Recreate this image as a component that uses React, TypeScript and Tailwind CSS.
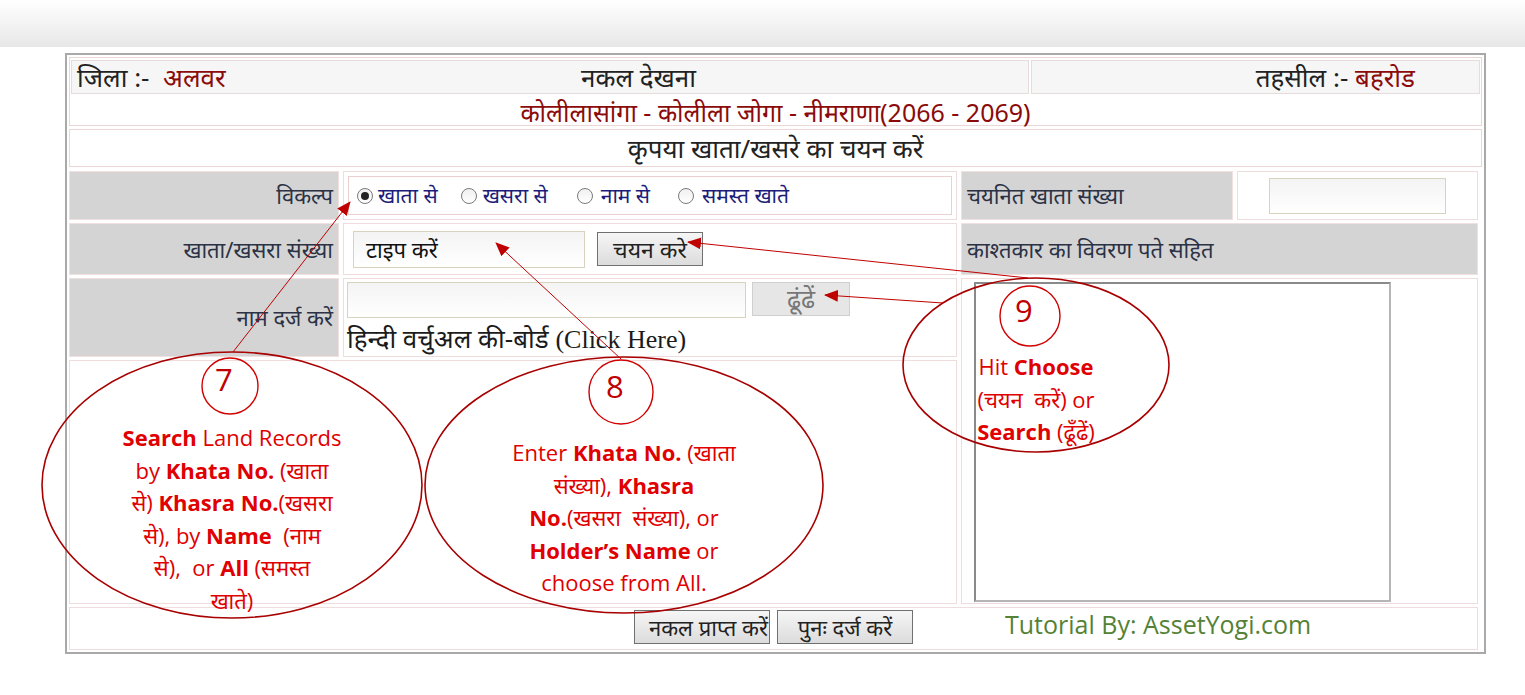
import React from "react";

const dev = { fontFamily: '"Noto Sans", "Liberation Sans", sans-serif' };

function Radio({ checked }: { checked?: boolean }) {
  return (
    <span className="inline-flex items-center justify-center w-[16px] h-[16px] rounded-full border border-[#7a7a7a] bg-gradient-to-b from-[#f0f0f0] to-white">
      {checked && <span className="w-[8px] h-[8px] rounded-full bg-[#222]" />}
    </span>
  );
}

function Overlay() {
  const red = "#a80000";
  return (
    <svg className="absolute left-0 top-0 pointer-events-none" width={1525} height={695}>
      <defs>
        <marker id="ah2" markerWidth="14" markerHeight="12" refX="13" refY="6" orient="auto" markerUnits="userSpaceOnUse">
          <path d="M0,0 L14,6 L0,12 z" fill="#c00000" />
        </marker>
      </defs>
      <ellipse cx={232} cy={485} rx={190} ry={133} fill="none" stroke={red} strokeWidth={1.6} />
      <circle cx={230} cy={386} r={28} fill="none" stroke="#d00000" strokeWidth={1.4} />
      <ellipse cx={624} cy={485} rx={199} ry={128} fill="none" stroke={red} strokeWidth={1.6} />
      <circle cx={621} cy={392} r={32} fill="none" stroke="#d00000" strokeWidth={1.4} />
      <ellipse cx={1036} cy={365} rx={133} ry={87} fill="none" stroke={red} strokeWidth={1.6} />
      <circle cx={1030} cy={316} r={30} fill="none" stroke="#d00000" strokeWidth={1.4} />
      <line x1={233} y1={352} x2={350} y2={202} stroke="#c00000" strokeWidth={1} markerEnd="url(#ah2)" />
      <line x1={621} y1={359} x2={496} y2={243} stroke="#c00000" strokeWidth={1} markerEnd="url(#ah2)" />
      <line x1={1028} y1={278} x2={688} y2={242} stroke="#c00000" strokeWidth={1} markerEnd="url(#ah2)" />
      <line x1={943} y1={303} x2={825} y2={295} stroke="#c00000" strokeWidth={1} markerEnd="url(#ah2)" />
    </svg>
  );
}

const annFont = { fontFamily: '"Open Sans", "Noto Sans", sans-serif' };

function Annotations() {
  return (
    <>
      <div className="absolute left-[215px] top-[364px] text-[31px] leading-none text-[#c00000]" style={annFont}>7</div>
      <div className="absolute left-[606px] top-[371px] text-[31px] leading-none text-[#c00000]" style={annFont}>8</div>
      <div className="absolute left-[1015px] top-[295px] text-[31px] leading-none text-[#c00000]" style={annFont}>9</div>

      <div className="absolute left-[72px] top-[421px] w-[320px] text-center text-[22px] leading-[32.5px] text-[#e00000]" style={annFont}>
        <div><b>Search</b> Land Records</div>
        <div>by <b>Khata No.</b> (खाता</div>
        <div>से) <b>Khasra No.</b>(खसरा</div>
        <div>से), by <b>Name</b>&nbsp; (नाम</div>
        <div>से),&nbsp; or <b>All</b> (समस्त</div>
        <div>खाते)</div>
      </div>

      <div className="absolute left-[464px] top-[436px] w-[320px] text-center text-[22px] leading-[32.5px] text-[#e00000]" style={annFont}>
        <div>Enter <b>Khata No.</b> (खाता</div>
        <div>संख्या), <b>Khasra</b></div>
        <div><b>No.</b>(खसरा&nbsp; संख्या), or</div>
        <div><b>Holder’s Name</b> or</div>
        <div>choose from All.</div>
      </div>

      <div className="absolute left-[931px] top-[350px] w-[210px] text-center text-[22px] leading-[32.5px] text-[#e00000]" style={annFont}>
        <div>Hit <b>Choose</b></div>
        <div>(चयन&nbsp; करें) or</div>
        <div><b>Search</b> (ढूँढें)</div>
      </div>
    </>
  );
}

export default function App() {
  const label = "bg-[#d4d4d4] border border-[#f0e0e0] flex items-center text-[22px] text-[#2b3245]";
  const cell = "bg-white border border-[#efdcdc]";
  const btn =
    "border border-[#707070] bg-gradient-to-b from-[#f6f6f6] to-[#dcdcdc] text-[#222] flex items-center justify-center overflow-hidden whitespace-nowrap";
  return (
    <div className="relative w-[1525px] h-[695px] bg-white overflow-hidden" style={dev}>
      <div className="h-[47px] bg-gradient-to-b from-white to-[#e7e7e7]" />
      <div className="ml-[65px] mt-[6px] w-[1421px] h-[601px] border-2 border-[#a9a9a9] flex flex-col pt-[2px] px-[2px] gap-[3px]">
        {/* Header box */}
        <div className="h-[69px] border border-[#ecd6d6] bg-white pt-[2px] px-[1px] flex flex-col">
          <div className="flex h-[34px] gap-[2px]">
            <div className="w-[958px] bg-[#f6f6f6] border border-[#e7dcdc] relative flex items-center text-[26px] text-[#222]">
              <span className="pl-[5px]">
                जिला :- &nbsp;<span className="text-[#8b0b0b]">अलवर</span>
              </span>
              <span className="absolute left-[509px]">नकल देखना</span>
            </div>
            <div className="flex-1 bg-[#f6f6f6] border border-[#e7dcdc] flex items-center justify-end pr-[64px] text-[26px] text-[#222]">
              <span>
                तहसील :- <span className="text-[#8b0b0b]">बहरोड</span>
              </span>
            </div>
          </div>
          <div className="flex-1 flex items-center justify-center text-[25px] text-[#8b0b0b]">
            कोलीलासांगा - कोलीला जोगा - नीमराणा(2066 - 2069)
          </div>
        </div>
        <div className="h-[38px] border border-[#ecd6d6] bg-white flex items-center justify-center text-[26px] text-[#222]">
          कृपया खाता/खसरे का चयन करें
        </div>
        {/* Main grid */}
        <div className="grid grid-cols-[270px_614px_272px_241px] grid-rows-[49px_52px_79px_244px_43px] gap-x-[4px] gap-y-[3px] pt-[1px]">
          {/* Row 4 */}
          <div className={label + " justify-end pr-[5px]"}>विकल्प</div>
          <div className={cell + " p-[4px]"}>
            <div className="h-full border border-[#ecd0d0] flex items-center pl-[8px] text-[21px] text-[#1c1c7a]">
              <Radio checked />
              <span className="ml-[5px]">खाता से</span>
              <span className="ml-[23px] flex"><Radio /></span>
              <span className="ml-[6px]">खसरा से</span>
              <span className="ml-[29px] flex"><Radio /></span>
              <span className="ml-[8px]">नाम से</span>
              <span className="ml-[28px] flex"><Radio /></span>
              <span className="ml-[8px]">समस्त खाते</span>
            </div>
          </div>
          <div className={label + " pl-[5px]"}>चयनित खाता संख्या</div>
          <div className={cell + " flex items-center pl-[31px]"}>
            <div className="w-[177px] h-[36px] border border-[#d9d2bd] bg-gradient-to-b from-[#f4f4f4] to-white" />
          </div>
          {/* Row 5 */}
          <div className={label + " justify-end pr-[5px]"}>खाता/खसरा संख्या</div>
          <div className={cell + " flex items-center pl-[9px]"}>
            <div className="w-[232px] h-[37px] border border-[#d9d2bd] bg-gradient-to-b from-[#f4f4f4] to-white flex items-center pl-[12px] text-[22px] text-[#111]">
              टाइप करें
            </div>
            <div className={btn + " ml-[12px] w-[106px] h-[34px] text-[23px]"}>चयन करे</div>
          </div>
          <div className={label + " col-span-2 pl-[5px]"}>काश्तकार का विवरण पते सहित</div>
          {/* Row 6 */}
          <div className={label + " justify-end pr-[5px]"}>नाम दर्ज करें</div>
          <div className={cell + " pl-[3px] pt-[3px] flex flex-col"}>
            <div className="flex items-start gap-[6px]">
              <div className="w-[399px] h-[36px] border border-[#d9d2bd] bg-gradient-to-b from-[#f4f4f4] to-white" />
              <div className="w-[98px] h-[34px] border border-[#cfcfcf] bg-[#e6e6e6] flex items-center justify-center text-[25px] text-[#777]">
                ढूंढें
              </div>
            </div>
            <div className="mt-[3px] text-[26px] leading-[34px] text-[#1b1b1b] whitespace-nowrap">
              हिन्दी वर्चुअल की-बोर्ड <span className="text-[26px]" style={{ fontFamily: '"Liberation Serif", serif' }}>(Click Here)</span>
            </div>
          </div>
          <div className={cell + " col-span-2 row-span-2 pl-[12px] pt-[3px]"}>
            <div className="w-[417px] h-[320px] border-2 border-[#8a8a8a] border-r-[#b5b5b5] border-b-[#b5b5b5] bg-white" />
          </div>
          {/* Row 7 */}
          <div className={cell + " col-span-2"} />
          {/* Row 8 */}
          <div className={cell + " col-span-4 relative flex items-center justify-center gap-[7px] pb-[3px]"}>
            <div className={btn + " w-[136px] h-[34px] text-[22px] justify-start pl-[14px]"}>नकल प्राप्त करें</div>
            <div className={btn + " w-[136px] h-[34px] text-[22px]"}>पुनः दर्ज करें</div>
            <div className="absolute left-[935px] top-[-2px] text-[25px] text-[#548235]" style={annFont}>
              Tutorial By: AssetYogi.com
            </div>
          </div>
        </div>
      </div>
      <Overlay />
      <Annotations />
    </div>
  );
}
